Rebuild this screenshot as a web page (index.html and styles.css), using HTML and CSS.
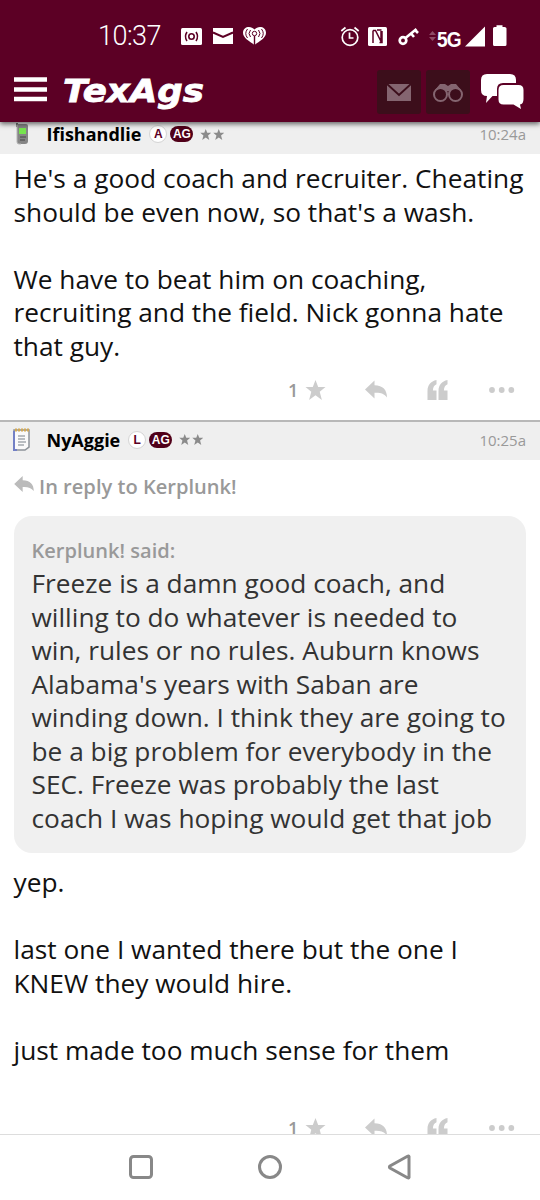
FILE: index.html
```html
<!DOCTYPE html>
<html lang="en">
<head>
<meta charset="utf-8">
<title>TexAgs</title>
<link rel="stylesheet" href="styles.css">
</head>
<body>
<svg class="defs" width="0" height="0">
  <symbol id="star" viewBox="0 0 20 20"><path d="M10 0l2.700 7H20l-5.800 4.700L16.400 20 10 15.300 3.600 20l2.200-8.300L0 7h7.300z"/></symbol>
  <symbol id="reply" viewBox="0 0 22 18"><path d="M0 9L9.500 0v4.800C18 5 22 9.500 22 17c-3-4-6.500-5-12.500-4.700V18z"/></symbol>
  <symbol id="quote" viewBox="0 0 20 20"><path d="M9 0v4.200C6.600 5.300 5.500 7 5.400 10.500H9V20H0v-9C0 5 3.200 1.200 9 0zM20 0v4.200c-2.400 1.100-3.500 2.800-3.600 6.300H20V20h-9v-9c0-6 3.200-9.800 9-11z"/></symbol>
  <symbol id="dots" viewBox="0 0 26 6"><circle cx="3" cy="3" r="2.900"/><circle cx="12.700" cy="3" r="2.900"/><circle cx="22.300" cy="3" r="2.900"/></symbol>
</svg>
<div class="screen">
  <header class="top">
    <div class="status">
      <span class="clock">10:37</span>
      <svg class="status-icons" width="440" height="40" viewBox="100 16 440 40">
        <rect x="181" y="28" width="21" height="17" rx="1.500" fill="#fff"/>
        <g fill="none" stroke="#5c0025" stroke-width="1.600"><circle cx="191.500" cy="36.500" r="2.700"/><path d="M187 32q-3 4.500 0 9M196 32q3 4.500 0 9"/></g>
        <rect x="213" y="28" width="20" height="16" fill="#fff"/><path d="M213 32.500l10 4.500 10-4.500" fill="none" stroke="#5c0025" stroke-width="2"/>
        <path d="M254.500 45c-5-4-11.500-7-11.500-12.300 0-6.300 8-7.500 11.500-3.200 3.500-4.300 11.500-3.100 11.500 3.200 0 5.300-6.500 8.300-11.500 12.300z" fill="#fff"/>
        <g fill="none" stroke="#5c0025" stroke-width="1"><circle cx="254.500" cy="33.500" r="2.200"/><path d="M250.500 30q-3 3.500 0 7M247.500 29q-3.500 4.500 0 9M258.500 30q3 3.500 0 7M261.500 29q3.500 4.500 0 9"/></g><path d="M253.800 36h1.400v9h-1.400z" fill="#5c0025"/>
        <g fill="none" stroke="#fff" stroke-width="1.700"><circle cx="350" cy="37.500" r="7.800"/><path d="M349.500 32.500v5.500h4M341.300 31l4.200-3.500M358.700 31l-4.200-3.500"/></g>
        <rect x="368" y="27" width="19" height="19" rx="1.500" fill="#fff"/><path d="M373 43V30.500M373 30.500h2.500L381 41.500V31M377 30h4.500M382 31v11.500h-2.500" fill="none" stroke="#5c0025" stroke-width="1.500"/>
        <g fill="none" stroke="#fff"><circle cx="403" cy="40.500" r="3.300" stroke-width="2.700"/><path d="M405.500 38l11-9M411 33.500l3 3.500M415 30l3 3" stroke-width="2.600"/></g>
        <path d="M429 35l3.500-4 3.500 4zM429 37l3.500 4 3.500-4z" fill="#8d4a67"/>
        <path d="M465 46.500l20-20v20zM493 28.500q0-1.500 1.500-1.500h2v-1.800h6V27h2q2 0 2 1.500v16q0 1.500-1.500 1.500h-10.500q-1.500 0-1.500-1.500z" fill="#fff"/>
      </svg>
      <span class="network">5G</span>
    </div>
    <nav class="nav">
      <svg class="menu" width="34" height="26"><path d="M0 2.500h33M0 12.500h33M0 22h33" stroke="#fff" stroke-width="4.500"/></svg>
      <svg class="logo" width="144" height="40" viewBox="64 72 144 40"><text transform="translate(63 101.500)" textLength="141" lengthAdjust="spacingAndGlyphs">TexAgs</text></svg>
      <span class="tile"><svg width="24" height="17"><path d="M0 0h24v17H0z"/><path d="M0 0l12 11L24 0" fill="none" stroke="#3c0e1b" stroke-width="2"/></svg></span>
      <span class="tile"><svg width="30" height="19"><path d="M2 7l5-6h5l3 2 3-2h5l5 6-5 3-8-2-8 2z"/><circle cx="7.500" cy="11.500" r="6.500"/><circle cx="22.500" cy="11.500" r="6.500"/></svg></span>
      <svg class="chat" width="43" height="35" viewBox="0 0 43 35"><path d="M6 0h23q6 0 6 6v3H22q-6 0-6 6v7h-4.500L5 29l1-7q-6 0-6-6V6q0-6 6-6z"/><path d="M22.500 11h15q5 0 5 5v9q0 5-3.500 5.500l1 4.500-7.500-4.500h-10q-5 0-5-5v-9.500q0-5 5-5z"/></svg>
    </nav>
  </header>
  <main class="thread">
    <article>
      <div class="post-head first">
        <svg class="avatar" width="18" height="22"><path d="M3 0h2v4H3z" fill="#777"/><path d="M4 1h9q2 0 2 2v15q0 3-3 3H6q-2 0-2-2z" fill="#858585"/><path d="M4 2v17q0 2 2 2h2" fill="none" stroke="#b5b5b5"/><rect x="6" y="5" width="7" height="6" fill="#76e44e"/><path d="M7 14h6M7 17h5" stroke="#5b5b5b" stroke-width="1.500"/></svg>
        <span class="name">Ifishandlie</span><span class="letter">A</span><span class="ag">AG</span>
        <svg class="mini"><use href="#star"/></svg><svg class="mini"><use href="#star"/></svg>
        <time>10:24a</time>
      </div>
      <p class="body b1">He's a good coach and recruiter. Cheating<br>should be even now, so that's a wash.<br><br>We have to beat him on coaching,<br>recruiting and the field. Nick gonna hate<br>that guy.</p>
      <div class="actions"><b>1</b><svg class="a-star"><use href="#star"/></svg><svg class="a-reply"><use href="#reply"/></svg><svg class="a-quote"><use href="#quote"/></svg><svg class="a-dots"><use href="#dots"/></svg></div>
    </article>
    <article>
      <div class="post-head second">
        <svg class="avatar" width="18" height="24"><path d="M1 2h15v17l-4 3H1z" fill="#fafafa" stroke="#8d9399" stroke-width="1.500"/><path d="M1 3v19h3" fill="none" stroke="#7380c5" stroke-width="2"/><path d="M2 2h14" stroke="#d1a957" stroke-width="3" stroke-dasharray="2 1"/><path d="M5 8h7M5 11h7M5 14h8M5 17h6" stroke="#788088"/></svg>
        <span class="name">NyAggie</span><span class="letter">L</span><span class="ag">AG</span>
        <svg class="mini"><use href="#star"/></svg><svg class="mini"><use href="#star"/></svg>
        <time>10:25a</time>
      </div>
      <div class="in-reply"><svg width="20" height="16"><use href="#reply"/></svg><span>In reply to Kerplunk!</span></div>
      <blockquote><cite>Kerplunk! said:</cite><p class="body">Freeze is a damn good coach, and<br>willing to do whatever is needed to<br>win, rules or no rules. Auburn knows<br>Alabama's years with Saban are<br>winding down. I think they are going to<br>be a big problem for everybody in the<br>SEC. Freeze was probably the last<br>coach I was hoping would get that job</p></blockquote>
      <p class="body b2">yep.<br><br>last one I wanted there but the one I<br>KNEW they would hire.<br><br>just made too much sense for them</p>
      <div class="actions last"><b>1</b><svg class="a-star"><use href="#star"/></svg><svg class="a-reply"><use href="#reply"/></svg><svg class="a-quote"><use href="#quote"/></svg><svg class="a-dots"><use href="#dots"/></svg></div>
    </article>
  </main>
  <footer class="sysnav"><svg width="540" height="65" fill="none" stroke="#888" stroke-width="3"><rect x="130.500" y="21.500" width="21" height="21" rx="3"/><circle cx="270" cy="32" r="10.500"/><path d="M409 21.500v21q-.3.800-1.500.200L390 33q-1.200-1 0-2l17.500-9.700q1.200-.6 1.500.2z"/></svg></footer>
</div>
</body>
</html>
```
FILE: styles.css
```css
* { box-sizing: border-box; }
body { margin: 0; background: #fff; font-family: "Open Sans", sans-serif; }
p { margin: 0; }
svg { flex: none; display: block; }
.defs { display: none; }
.screen { width: 540px; height: 1200px; display: flex; flex-direction: column; overflow: hidden; }
.top { height: 122px; flex: none; background: #5c0025; position: relative; z-index: 1; box-shadow: 0 2px 5px rgba(0,0,0,.6); color: #fff; }
.status { height: 58px; padding: 16px 0 0 100px; position: relative; }
.clock { position: absolute; left: 98px; top: 18px; font: 350 27px/36px Roboto, sans-serif; letter-spacing: -.5px; }
.network { position: absolute; left: 437px; top: 28px; font: bold 22.500px/24px "Liberation Sans", sans-serif; letter-spacing: -1px; transform: scaleX(.85); transform-origin: left; }
.nav { display: flex; height: 64px; padding-left: 14px; align-items: flex-start; }
.menu { margin: 19px 16px 0 0; }
.logo { margin-top: 14px; overflow: visible; }
.logo text { font: italic bold 32px "DejaVu Sans", sans-serif; fill: #fff; stroke: #fff; stroke-width: .8px; }
.tile { width: 44px; height: 44px; margin: 12px 5px 0 0; background: #3c0e1b; border-radius: 3px; display: grid; place-items: center; flex: none; }
.logo + .tile { margin-left: 169px; }
.tile svg { fill: #846570; }
.tile circle { fill: #3c0e1b; stroke: #846570; stroke-width: 2; }
.chat { fill: #fff; margin: 16px 0 0 6px; }
.thread { flex: 1; min-height: 0; overflow: hidden; }
.post-head { display: flex; align-items: center; background: #efefef; padding: 0 14px 0 13px; }
.first { height: 32px; padding-bottom: 8px; }
.second { height: 40px; border-top: 2px solid #b8b8b8; padding-bottom: 3px; }
.avatar { width: 18px; margin-right: 15.500px; }
.name { font-size: 18px; font-weight: 700; line-height: 26px; color: #000; }
.letter, .ag { font: bold 12px/16px "Liberation Sans", sans-serif; text-align: center; }
.letter { width: 18px; height: 18px; border: 1px solid #d4d4d4; border-radius: 50%; background: #fff; color: #5c0025; margin-left: 8px; }
.ag { width: 23px; height: 16px; border-radius: 8px; background: #500019; color: #fff; margin: 0 7px 0 3px; }
.mini { width: 11.500px; height: 11px; margin-right: 1px; fill: #8b8b8b; }
time { margin-left: auto; color: #999; font-size: 15px; line-height: 22px; }
.body { font-size: 26.270px; line-height: 33.520px; white-space: nowrap; color: #111; }
.b1 { padding: 8px 13.500px 0; height: 209px; }
.actions { display: flex; align-items: center; height: 57px; padding: 0 0 4px 288px; fill: #ccc; }
.actions b { width: 9px; margin-right: 8px; color: #999; font-size: 18px; font-weight: 600; line-height: 26px; }
.last { padding-top: 4px; }
.a-star { width: 21px; height: 20px; margin-right: 39px; }
.a-reply { width: 22px; height: 19px; margin-right: 40px; }
.a-quote { width: 21px; height: 20px; margin-right: 41px; }
.a-dots { width: 26px; height: 6px; }
.in-reply { display: flex; height: 56px; padding: 0 14px; color: #999; fill: #bbb; font-size: 20.100px; font-weight: 600; line-height: 53px; }
.in-reply svg { margin: 16px 5px 0 0; }
blockquote { margin: 0 14px 0 13.500px; background: #f0f0f0; border-radius: 18px; height: 337px; padding: 18px 18px; }
cite { display: block; font: 600 20.060px/33px "Open Sans", sans-serif; color: #999; }
blockquote .body { color: #333; }
.b2 { padding: 13px 13.500px 0; height: 246px; }
.sysnav { height: 66px; flex: none; border-top: 1px solid #ddd; background: #fff; }
```
